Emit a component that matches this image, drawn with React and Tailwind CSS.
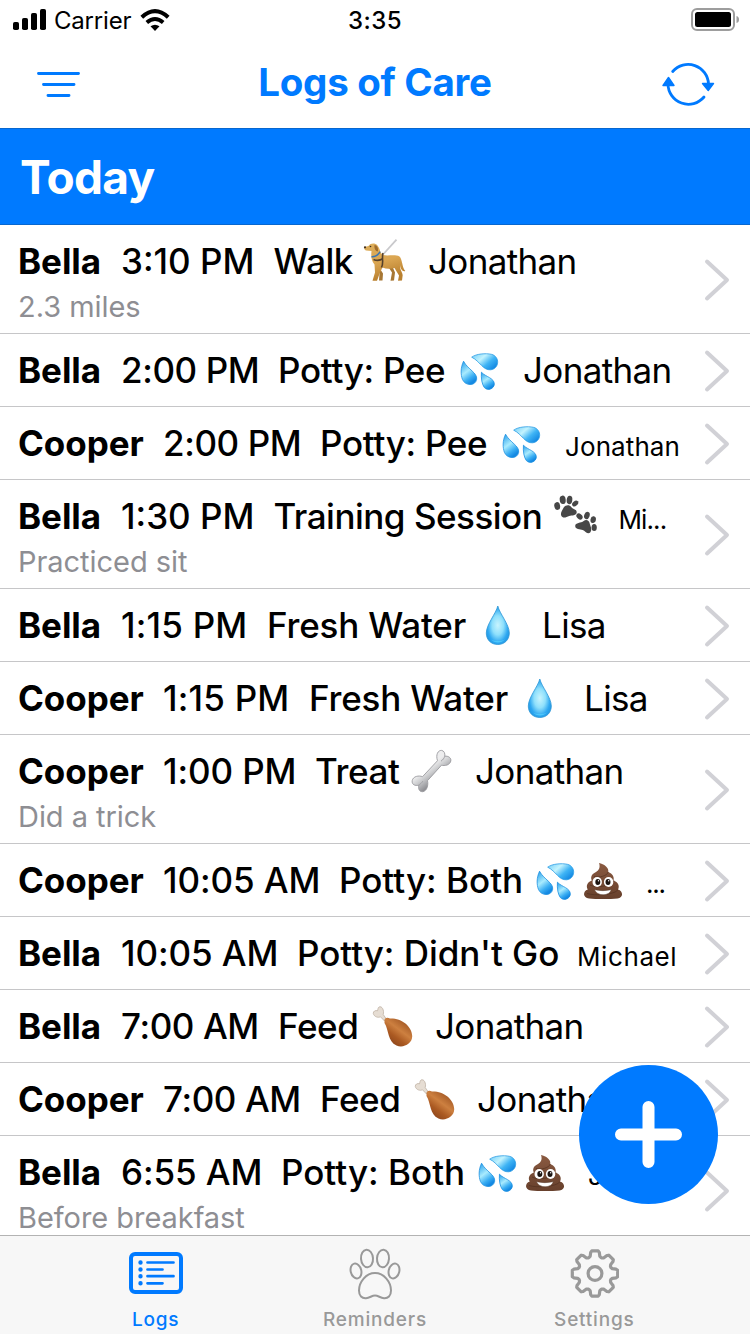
import React from "react";

function Drops() {
  return (
    <svg viewBox="-1 -1.8 46 46" className="h-11 w-11 shrink-0">
      <defs>
        <linearGradient id="dropsA" x1="0" y1="0" x2="1" y2="0.7">
          <stop offset="0" stopColor="#6fcdf8" />
          <stop offset="0.4" stopColor="#c3f3fe" />
          <stop offset="0.7" stopColor="#3fb4f5" />
          <stop offset="1" stopColor="#1489e3" />
        </linearGradient>
        <linearGradient id="dropsB" x1="0" y1="0" x2="0.5" y2="1">
          <stop offset="0" stopColor="#1f9aea" />
          <stop offset="0.5" stopColor="#a9ebfe" />
          <stop offset="0.8" stopColor="#3aaef3" />
          <stop offset="1" stopColor="#1489e3" />
        </linearGradient>
      </defs>
      <path d="M13.3 7.8C18 4.2 28 3.5 34 4.8C43 7 42.5 20 33 21C25 21.6 22 12 13.3 7.8Z" fill="url(#dropsA)" stroke="#2398e4" strokeWidth="0.8" />
      <path d="M4.8 12C1.5 19 1.8 26 3.6 31C6.5 38 17 38.5 18.5 31C19.5 24 9.5 21 4.8 12Z" fill="url(#dropsB)" stroke="#178ce0" strokeWidth="0.8" />
      <path d="M23.5 23.5C23 30 24 36 26.5 39.5C30 43.5 36.5 41 37 36C37 29.5 28 28.5 23.5 23.5Z" fill="url(#dropsB)" stroke="#178ce0" strokeWidth="0.8" />
    </svg>
  );
}

function Drop() {
  return (
    <svg viewBox="0 -0.5 44 44" className="h-11 w-11 shrink-0">
      <defs>
        <radialGradient id="dropG" cx="0.5" cy="0.5" r="0.62">
          <stop offset="0" stopColor="#c8f4fe" />
          <stop offset="0.4" stopColor="#8fe0fc" />
          <stop offset="0.72" stopColor="#2fa8f1" />
          <stop offset="1" stopColor="#1d8fdc" />
        </radialGradient>
      </defs>
      <path d="M20.8 2.5C19 10 9.3 21 9.3 29.5C9.3 36.5 14.3 41 20.8 41C27.3 41 32.3 36.5 32.3 29.5C32.3 21 22.6 10 20.8 2.5Z" fill="url(#dropG)" stroke="#2d97d6" strokeWidth="0.8" />
      <path d="M14 36C17.5 40 24.5 40 27.8 36C24 38 17.5 38 14 36Z" fill="#4cc7fa" />
    </svg>
  );
}

function Poop() {
  return (
    <svg viewBox="0 0 44 44" className="h-11 w-11 shrink-0">
      <defs>
        <linearGradient id="poopG" x1="0" y1="0" x2="0" y2="1">
          <stop offset="0" stopColor="#8a5a41" />
          <stop offset="1" stopColor="#67402c" />
        </linearGradient>
      </defs>
      <path d="M18 5C23 6 28 9.5 27.3 14C31.5 15.5 33.5 19 32.5 22.5C37 24 39 28 37 31.5C42.5 33 42.5 40 36.5 40.5C29 41.3 15 41.3 8 40.5C1.8 40 1.5 33 6.8 31.5C4.500 28 6.5 24 10.8 22.5C9 18.5 11.5 15.5 15 14C18 12.5 19.5 9 18 5Z" fill="url(#poopG)" />
      <path d="M13 18.5C18 20 26 18 27.3 14M9 27C14 30 29 29 33 22.8M6 35.5C14 38 33 37 37 31.8" fill="none" stroke="#51301f" strokeWidth="0.9" opacity="0.75" />
      <ellipse cx="16.2" cy="24" rx="4.7" ry="5" fill="#fff" />
      <ellipse cx="27.6" cy="24" rx="4.7" ry="5" fill="#fff" />
      <ellipse cx="16.8" cy="24" rx="2.5" ry="2.9" fill="#1d1512" />
      <ellipse cx="27" cy="24" rx="2.5" ry="2.9" fill="#1d1512" />
      <circle cx="17.5" cy="22.8" r="0.7" fill="#fff" />
      <circle cx="27.7" cy="22.8" r="0.7" fill="#fff" />
      <path d="M13.5 31.5C18 33 25.5 33 30.3 31.5C29 38.5 15.5 38.5 13.5 31.5Z" fill="#fff" stroke="#51301f" strokeWidth="0.5" />
    </svg>
  );
}

function Drumstick() {
  return (
    <svg viewBox="0 0 44 44" className="h-11 w-11 shrink-0">
      <defs>
        <linearGradient id="legG" x1="0.2" y1="1" x2="0.85" y2="0.1">
          <stop offset="0" stopColor="#84401a" />
          <stop offset="0.35" stopColor="#ab5a22" />
          <stop offset="0.6" stopColor="#cd8040" />
          <stop offset="1" stopColor="#9a501f" />
        </linearGradient>
      </defs>
      <path d="M16 14.5L13.2 10.5C14.5 6.5 12 1.5 9 3C7.8 3.7 8 5.500 7.5 6.8C5.5 6 3 7.2 3.3 9.5C4 13 8.500 14 10.5 12.8L14.5 17Z" fill="#e6ddd3" stroke="#b9aa9c" strokeWidth="0.7" />
      <path d="M14.5 16.5C14.5 13.5 17.5 13 20 14.5C31 14 42 22 42.2 32C42.5 40 33 44.5 26.5 41.5C17.5 37.5 19 26 14.5 19Z" fill="url(#legG)" />
    </svg>
  );
}

function Bone() {
  return (
    <svg viewBox="0 0.8 44 44" className="h-11 w-11 shrink-0">
      <defs>
        <linearGradient id="boneG" x1="0.3" y1="0.2" x2="0.7" y2="0.75">
          <stop offset="0.35" stopColor="#ededee" />
          <stop offset="0.55" stopColor="#cfd0d2" />
          <stop offset="1" stopColor="#808085" />
        </linearGradient>
      </defs>
      <path d="M27.5 12.5C25.5 6.5 28 2 31.5 2.2C34 2.4 35.2 5 34.8 8C38 7.5 41.5 9.5 40.8 12.8C40 17 34.5 18 31.5 17L17.5 32.5C18.5 37 17 43 12.5 43.5C9 43.5 8 40 8.8 37C5.5 38 1.5 36.5 2.2 32.5C3 28 9 27 12.5 28.5Z" fill="url(#boneG)" stroke="#9b9b9f" strokeWidth="0.9" />
      <path d="M12.8 33C11.5 35 10 36 8.8 37M31 13C33 11.5 34.2 10 34.8 8" fill="none" stroke="#a0a0a4" strokeWidth="1" />
    </svg>
  );
}

function Paws() {
  return (
    <svg viewBox="0.8 0.5 44 44" className="h-11 w-11 shrink-0" fill="#474747">
      <g transform="translate(0.5 0.5)">
        <ellipse cx="3.5" cy="12" rx="2.9" ry="3.9" transform="rotate(-12 3.5 12)" />
        <ellipse cx="9" cy="5.8" rx="3" ry="4.2" transform="rotate(-8 9 5.8)" />
        <ellipse cx="15.8" cy="6" rx="2.800" ry="4.2" transform="rotate(8 15.8 6)" />
        <ellipse cx="21.5" cy="9.5" rx="2.4" ry="3.4" transform="rotate(50 21.5 9.5)" />
        <path d="M10 13.5C12 10.5 16 10.5 17.5 13C19 15.5 23 15 23 18.2C22.8 22 18 21 15.5 22C12.5 23.2 9 25 7.5 21.5C6.5 18.5 8.8 16 10 13.5Z" />
      </g>
      <ellipse cx="26.3" cy="23" rx="2.5" ry="3.5" transform="rotate(-50 26.3 23)" />
      <ellipse cx="33.7" cy="22" rx="2.7" ry="3.7" transform="rotate(20 33.7 22)" />
      <ellipse cx="40" cy="26.2" rx="2.7" ry="3.4" transform="rotate(10 40 26.2)" />
      <ellipse cx="41" cy="34" rx="2.6" ry="3.6" />
      <path d="M30.5 27.5C33 25.5 36 27 36.5 30C37 32.5 39.5 36 37 39C34.5 41.5 32 37.5 29.5 36.5C27 35.5 22 36 22 32.5C22 29 28 29.5 30.5 27.5Z" />
    </svg>
  );
}

function GuideDog() {
  return (
    <svg viewBox="0 0.5 44 44" className="h-11 w-11 shrink-0">
      <defs>
        <linearGradient id="dogG" x1="0" y1="0" x2="0.3" y2="1">
          <stop offset="0" stopColor="#dcae5c" />
          <stop offset="0.55" stopColor="#dba652" />
          <stop offset="1" stopColor="#b9802f" />
        </linearGradient>
      </defs>
      <path d="M20 16L33.5 1.2" stroke="#c9c9cc" strokeWidth="1.8" />
      <path d="M29 27L32 34L31 42L27.500 42.300L29 34L25 28ZM15.5 28L20 35L19.5 42L16 42L16.5 35L13 29Z" fill="#a77734" />
      <path d="M1.2 8.5L5.5 7.5C7.5 4.5 12 4.2 14.5 7C17.5 11 16.5 14 20 16.5C25 17.8 32 15.5 36.5 18C39.500 21 39 29 42.300 32.500C39.500 33.500 37.200 30 37 26.500C36.500 32 40.500 34 39.500 38L39 42L35 42.3L36 37L31.5 29.5C27 30.5 23 30.5 19.5 29L17 34L14 42.300H9.500L12 34L11.5 26C8 22 8 17 8.5 12.5L3 12C1.2 11.5 1 10 1.2 8.5Z" fill="url(#dogG)" />
      <path d="M11.5 6.5C14.5 7 15.5 10 14.8 13C12.5 13 11 10 11.5 6.5Z" fill="#a06c2c" />
      <path d="M8.5 18.2C12 18.5 15.5 16 17.2 13.2" fill="none" stroke="#3976b5" strokeWidth="1.5" />
      <path d="M10.5 21C14 22.5 18 21.5 20 20M20 14.5C18.5 20 21 24 18.5 29" fill="none" stroke="#54402b" strokeWidth="1.6" />
      <circle cx="2" cy="8.8" r="1.1" fill="#3b2a1b" />
      <circle cx="7.5" cy="8" r="0.8" fill="#3b2a1b" />
    </svg>
  );
}

const LOGS = [
  { name: "Bella", time: "3:10 PM", tw: "w-[152.5px] tracking-[0px]", action: "Walk", aw: "w-[89.5px] tracking-[-0.6px]", icons: [GuideDog], who: "Jonathan", note: "2.3 miles" },
  { name: "Bella", time: "2:00 PM", tw: "w-[157px] tracking-[-0.4px]", action: "Potty: Pee", aw: "w-[180px] tracking-[-0.3px]", icons: [Drops], who: "Jonathan" },
  { name: "Cooper", time: "2:00 PM", tw: "w-[157px] tracking-[-0.4px]", action: "Potty: Pee", aw: "w-[180px] tracking-[-0.3px]", icons: [Drops], who: "Jonathan", small: "tracking-[0.1px]" },
  { name: "Bella", time: "1:30 PM", tw: "w-[152.5px] tracking-[0px]", action: "Training Session", aw: "w-[280px] tracking-[-0.5px]", icons: [Paws], who: "Mi...", small: "tracking-[-0.9px]", note: "Practiced sit" },
  { name: "Bella", time: "1:15 PM", tw: "w-[146px] tracking-[0.2px]", action: "Fresh Water", aw: "w-[210px] tracking-[-0.2px]", icons: [Drop], who: "Lisa" },
  { name: "Cooper", time: "1:15 PM", tw: "w-[146px] tracking-[0.2px]", action: "Fresh Water", aw: "w-[210px] tracking-[-0.2px]", icons: [Drop], who: "Lisa" },
  { name: "Cooper", time: "1:00 PM", tw: "w-[152px] tracking-[-0.1px]", action: "Treat", aw: "w-[95px] tracking-[-0.4px]", icons: [Bone], who: "Jonathan", note: "Did a trick" },
  { name: "Cooper", time: "10:05 AM", tw: "w-[176px] tracking-[-0.1px]", action: "Potty: Both", aw: "w-[195px] tracking-[0px]", icons: [Drops, Poop], who: "...", small: "tracking-[-1.3px]" },
  { name: "Bella", time: "10:05 AM", tw: "w-[176px] tracking-[-0.1px]", action: "Potty: Didn't Go", aw: "w-[280px] tracking-[-0.05px]", icons: [], who: "Michael", small: "tracking-[0.6px]" },
  { name: "Bella", time: "7:00 AM", tw: "w-[157px] tracking-[-0.4px]", action: "Feed", aw: "w-[92px] tracking-[-0.4px]", icons: [Drumstick], who: "Jonathan" },
  { name: "Cooper", time: "7:00 AM", tw: "w-[157px] tracking-[-0.4px]", action: "Feed", aw: "w-[92px] tracking-[-0.4px]", icons: [Drumstick], who: "Jonathan" },
  { name: "Bella", time: "6:55 AM", tw: "w-[160px] tracking-[-0.1px]", action: "Potty: Both", aw: "w-[195px] tracking-[0px]", icons: [Drops, Poop], who: "J...", small: "tracking-[-0.9px]", note: "Before breakfast" },
];

function LogRow({ log }) {
  return (
    <li className={`flex shrink-0 items-center border-b border-[#c6c6c8] pl-[18px] ${log.note ? "h-[109px]" : "h-[73px]"}`}>
      <div className="flex h-full min-w-0 flex-1 flex-col">
        <div className="flex h-[72px] shrink-0 items-center whitespace-nowrap text-[35px] font-medium leading-[44px]">
          <span className={`shrink-0 font-bold tracking-[-0.05px] ${log.name === "Bella" ? "w-[103px]" : "w-[145px]"}`}>{log.name}</span>
          <span className={`shrink-0 ${log.tw}`}>{log.time}</span>
          <span className={`shrink-0 ${log.aw}`}>{log.action}</span>
          {log.icons.length > 0 && (
            <span className="mr-[21px] flex shrink-0 gap-[3px]">
              {log.icons.map((Icon, i) => <Icon key={i} />)}
            </span>
          )}
          <span className={log.small ? `pt-[7px] text-[26px] font-normal leading-8 ${log.small}` : "font-normal tracking-[-0.65px]"}>{log.who}</span>
        </div>
        {log.note && <p className="-mt-2 text-[29px] leading-9 tracking-[-0.05px] text-[#8e8e93]">{log.note}</p>}
      </div>
      <svg viewBox="0 0 28 44" className="mr-[19px] mt-[2px] h-11 w-7 shrink-0" fill="none" stroke="#d1d1d6" strokeWidth="4" strokeLinecap="round" strokeLinejoin="round">
        <path d="M4 3.5L24 22L4 40.5" />
      </svg>
    </li>
  );
}

function gearPath() {
  const pts = [];
  for (let i = 0; i < 8; i++) {
    const a = (i * Math.PI) / 4 - Math.PI / 2;
    [[-0.36, 17], [-0.27, 18], [-0.2, 21.6], [-0.14, 22.9], [0.14, 22.9], [0.2, 21.6], [0.27, 18], [0.36, 17]].forEach(([d, r]) => {
      pts.push(`${(25 + r * Math.cos(a + d)).toFixed(2)} ${(25 + r * Math.sin(a + d)).toFixed(2)}`);
    });
  }
  return `M${pts.join("L")}Z`;
}

function Tab({ label, active, children }) {
  return (
    <button className={`flex flex-1 flex-col items-center pt-[11px] ${active ? "text-[#007aff]" : "text-[#999999]"}`}>
      {children}
      <span className="mt-2 text-[19px] font-medium leading-6 tracking-[0.8px]">{label}</span>
    </button>
  );
}

export default function App() {
  return (
    <div className="relative flex h-[1334px] w-[750px] flex-col overflow-hidden bg-white font-['Inter',sans-serif] text-black">
      <div className="grid h-10 shrink-0 grid-cols-3 items-center">
        <div className="flex items-center pl-[13px]">
          <svg viewBox="0 0 34 22" className="h-[22px] w-[34px]">
            <rect x="0" y="13" width="6" height="8" rx="1.8" />
            <rect x="9" y="9" width="6" height="12" rx="1.8" />
            <rect x="18" y="4" width="6" height="17" rx="1.8" />
            <rect x="27" y="0" width="6" height="21" rx="1.8" />
          </svg>
          <span className="ml-[7px] w-[86px] pt-0.5 text-[24px] leading-8 tracking-[-0.2px]">Carrier</span>
          <svg viewBox="0 0 30 22" className="h-[22px] w-[30px]">
            <path d="M15 22L10.500 17.300Q15 14 19.500 17.300Z" />
            <path d="M6.8 13.5Q15 6.400 23.2 13.500" fill="none" stroke="#000" strokeWidth="3.9" />
            <path d="M1.8 8.200Q15 -4 28.2 8.200" fill="none" stroke="#000" strokeWidth="4" />
          </svg>
        </div>
        <span className="pt-0.5 text-center text-[24px] font-medium leading-8 tracking-[0.5px]">3:35</span>
        <svg viewBox="0 0 49 24" className="mr-[10px] h-6 w-[49px] justify-self-end">
          <rect x="1" y="1" width="42" height="21" rx="5" fill="none" stroke="#9d9d9d" strokeWidth="2" />
          <rect x="4" y="4" width="36" height="15" rx="2.5" />
          <path d="M45.500 8Q48 8.5 48 11.5T45.500 15Z" fill="#9d9d9d" />
        </svg>
      </div>

      <header className="flex h-[88px] shrink-0 items-center justify-between pl-9 pr-[34px]">
        <svg viewBox="0 0 46 30" className="h-[30px] w-[46px]" stroke="#007aff" strokeWidth="2.9" strokeLinecap="round">
          <path d="M2.5 4.500H42.5M7.5 15.5H38M12 26.5H33" />
        </svg>
        <h1 className="-mt-1 ml-2 text-[38.5px] font-bold leading-[48px] tracking-[-0.3px] text-[#007aff]">Logs of Care</h1>
        <svg viewBox="0 0 56 48" className="h-12 w-14" fill="none" stroke="#007aff" strokeWidth="2.8" strokeLinecap="round">
          <path d="M12.7 11.500A20.4 20.4 0 0 1 48.5 24" />
          <path d="M44 37A20.4 20.4 0 0 1 8 24" />
          <path d="M42.5 23.5H53.5L48.2 30.5ZM3 25.5L8.5 17.5L14 25.5Z" fill="#007aff" strokeWidth="1.4" strokeLinejoin="round" />
        </svg>
      </header>

      <h2 className="flex h-[97px] shrink-0 items-center border-y border-[#0867cf] bg-[#007aff] pl-5 text-[46px] font-bold leading-[60px] tracking-[-0.7px] text-white">Today</h2>

      <ul className="flex min-h-0 flex-1 flex-col overflow-hidden">
        {LOGS.map((log, i) => <LogRow key={i} log={log} />)}
      </ul>

      <button aria-label="Add log" className="absolute left-[579px] top-[1065px] flex h-[139px] w-[139px] items-center justify-center rounded-full bg-[#007aff]">
        <svg viewBox="0 0 67 67" className="h-[67px] w-[67px]" stroke="#fff" strokeWidth="12" strokeLinecap="round">
          <path d="M33.5 6V61M6 33.5H61" />
        </svg>
      </button>

      <nav className="flex h-[99px] shrink-0 border-t border-[#b3b3b3] bg-[#f7f7f7] px-[46px]">
        <Tab label="Logs" active>
          <svg viewBox="0 0 56 53" className="h-[53px] w-14" fill="none" stroke="currentColor" strokeLinecap="round">
            <rect x="3" y="7" width="50" height="38" rx="4" strokeWidth="4" />
            <path d="M19.500 15.5H45.5M19.500 22.5H34.5M19.500 29.2H45.5M19.500 36.3H34.5" strokeWidth="2.7" />
            <path d="M12.500 15.5H12.510M12.500 22.5H12.510M12.500 29.2H12.510M12.500 36.3H12.510" strokeWidth="4.4" />
          </svg>
        </Tab>
        <Tab label="Reminders">
          <svg viewBox="0 0 52 53" className="h-[53px] w-[52px]" fill="none" stroke="currentColor" strokeWidth="2">
            <ellipse cx="18" cy="11.5" rx="6" ry="8.8" transform="rotate(-4 18 11.5)" />
            <ellipse cx="34" cy="11.5" rx="6" ry="8.8" transform="rotate(4 34 11.5)" />
            <ellipse cx="7" cy="24" rx="5.3" ry="7.6" transform="rotate(-14 7 24)" />
            <ellipse cx="45" cy="24" rx="5.3" ry="7.6" transform="rotate(14 45 24)" />
            <path d="M26 26C17 26 10 35 10 43.500C10 49 13 51.5 17 51.2C21 51 22.5 48.500 26 48.500S31 51 35 51.2C39 51.5 42 49 42 43.500C42 35 35 26 26 26Z" />
          </svg>
        </Tab>
        <Tab label="Settings">
          <svg viewBox="-1 -1.5 50 53" className="h-[53px] w-[50px]" fill="none" stroke="currentColor" strokeWidth="3.2" strokeLinejoin="round">
            <path d={gearPath()} />
            <circle cx="25" cy="25" r="6.9" />
          </svg>
        </Tab>
      </nav>
    </div>
  );
}
